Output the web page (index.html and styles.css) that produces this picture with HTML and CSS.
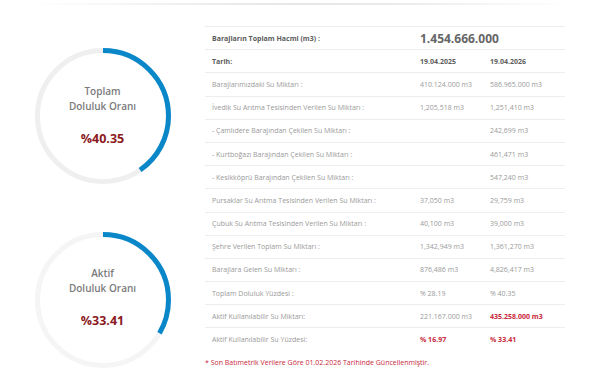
FILE: index.html
```html
<!DOCTYPE html>
<html lang="tr">
  <head>
    <meta charset="UTF-8" />
    <meta name="viewport" content="width=device-width, initial-scale=1.0" />
    <title>Baraj Doluluk Oranları</title>
    <link rel="stylesheet" href="styles.css">
  </head>
  <body>
    <div class="topLine"></div>
    <div class="content">
      <div class="gauges">
        <div class="gauge">
          <svg class="ring" viewBox="0 0 136 136" width="136" height="136">
            <circle cx="68" cy="68" r="65.5" fill="none" stroke="#efefef" stroke-width="5" />
            <circle cx="68" cy="68" r="65.5" fill="none" stroke="#0a87c9" stroke-width="5"
              stroke-dasharray="166.05 411.55" transform="rotate(-90 68 68)" />
          </svg>
          <div class="gaugeTitle">Toplam<br />Doluluk Oranı</div>
          <div class="gaugeValue">%40.35</div>
        </div>
        <div class="gauge second">
          <svg class="ring" viewBox="0 0 136 136" width="136" height="136">
            <circle cx="68" cy="68" r="65.5" fill="none" stroke="#f5f5f5" stroke-width="5" />
            <circle cx="68" cy="68" r="65.5" fill="none" stroke="#0a87c9" stroke-width="5"
              stroke-dasharray="137.5 411.55" transform="rotate(-90 68 68)" />
          </svg>
          <div class="gaugeTitle">Aktif<br />Doluluk Oranı</div>
          <div class="gaugeValue">%33.41</div>
        </div>
      </div>

      <div class="tableWrap">
        <div class="row head">
          <div class="cell">Barajların Toplam Hacmi (m3) :</div>
          <div class="cell total">1.454.666.000</div>
        </div>
        <div class="row head">
          <div class="cell">Tarih:</div>
          <div class="cell">19.04.2025</div>
          <div class="cell">19.04.2026</div>
        </div>
        <div class="row">
          <div class="cell">Barajlarımızdaki Su Miktarı :</div>
          <div class="cell">410.124.000 m3</div>
          <div class="cell">586.965.000 m3</div>
        </div>
        <div class="row">
          <div class="cell">İvedik Su Arıtma Tesisinden Verilen Su Miktarı :</div>
          <div class="cell">1,205,518 m3</div>
          <div class="cell">1,251,410 m3</div>
        </div>
        <div class="row">
          <div class="cell">- Çamlıdere Barajından Çekilen Su Miktarı :</div>
          <div class="cell"></div>
          <div class="cell">242,699 m3</div>
        </div>
        <div class="row">
          <div class="cell">- Kurtboğazı Barajından Çekilen Su Miktarı :</div>
          <div class="cell"></div>
          <div class="cell">461,471 m3</div>
        </div>
        <div class="row">
          <div class="cell">- Kesikköprü Barajından Çekilen Su Miktarı :</div>
          <div class="cell"></div>
          <div class="cell">547,240 m3</div>
        </div>
        <div class="row">
          <div class="cell">Pursaklar Su Arıtma Tesisinden Verilen Su Miktarı :</div>
          <div class="cell">37,050 m3</div>
          <div class="cell">29,759 m3</div>
        </div>
        <div class="row">
          <div class="cell">Çubuk Su Arıtma Tesisinden Verilen Su Miktarı :</div>
          <div class="cell">40,100 m3</div>
          <div class="cell">39,000 m3</div>
        </div>
        <div class="row">
          <div class="cell">Şehre Verilen Toplam Su Miktarı :</div>
          <div class="cell">1,342,949 m3</div>
          <div class="cell">1,361,270 m3</div>
        </div>
        <div class="row">
          <div class="cell">Barajlara Gelen Su Miktarı :</div>
          <div class="cell">876,486 m3</div>
          <div class="cell">4,826,417 m3</div>
        </div>
        <div class="row">
          <div class="cell">Toplam Doluluk Yüzdesi :</div>
          <div class="cell">% 28.19</div>
          <div class="cell">% 40.35</div>
        </div>
        <div class="row">
          <div class="cell">Aktif Kullanılabilir Su Miktarı:</div>
          <div class="cell">221.167.000 m3</div>
          <div class="cell red">435.258.000 m3</div>
        </div>
        <div class="row">
          <div class="cell">Aktif Kullanılabilir Su Yüzdesi:</div>
          <div class="cell red">% 16.97</div>
          <div class="cell red">% 33.41</div>
        </div>
        <div class="note">* Son Batımetrik Verilere Göre 01.02.2026 Tarihinde Güncellenmiştir.</div>
      </div>
    </div>
  </body>
</html>
```

FILE: styles.css
```css
body {
  margin: 0;
  background: #fff;
  font-family: 'Open Sans', 'Liberation Sans', sans-serif;
}

.topLine {
  height: 2px;
  margin: 3px 30px 0 30px;
  background: linear-gradient(to right, rgba(230, 230, 230, 0), #ececec 35%, #e6e6e6 50%, #ececec 70%, rgba(230, 230, 230, 0));
}

.content {
  display: flex;
  margin-top: 21px;
}

.gauges {
  width: 205px;
  display: flex;
  flex-direction: column;
  align-items: center;
  padding-top: 21.5px;
  gap: 48px;
}

.gauge {
  position: relative;
  width: 136px;
  height: 136px;
  display: flex;
  flex-direction: column;
  align-items: center;
  box-sizing: border-box;
  padding-top: 36px;
}
.gauge.second {
  padding-top: 34px;
}

.ring {
  position: absolute;
  left: 0;
  top: 0;
}

.gaugeTitle {
  position: relative;
  font-size: 10px;
  font-weight: 600;
  line-height: 15.5px;
  color: #7b7b7b;
  text-align: center;
}

.gaugeValue {
  position: relative;
  margin-top: 15px;
  font-size: 12.5px;
  font-weight: 700;
  color: #8b1b1f;
}

.tableWrap {
  width: 360px;
}

.row {
  display: grid;
  grid-template-columns: 208px 70px 1fr;
  align-items: center;
  height: 23.2px;
  box-sizing: border-box;
  border-top: 1px solid #ededed;
  font-size: 7px;
  color: #9a9a9a;
}

.cell {
  padding-left: 7px;
  white-space: nowrap;
}

.head .cell {
  font-weight: 700;
  color: #5c5c5c;
}
.head .total {
  font-size: 12px;
  color: #666;
}

.red {
  color: #c8283a;
  font-weight: 700;
}

.note {
  margin-top: 7px;
  font-size: 7px;
  color: #c8283a;
}
```
